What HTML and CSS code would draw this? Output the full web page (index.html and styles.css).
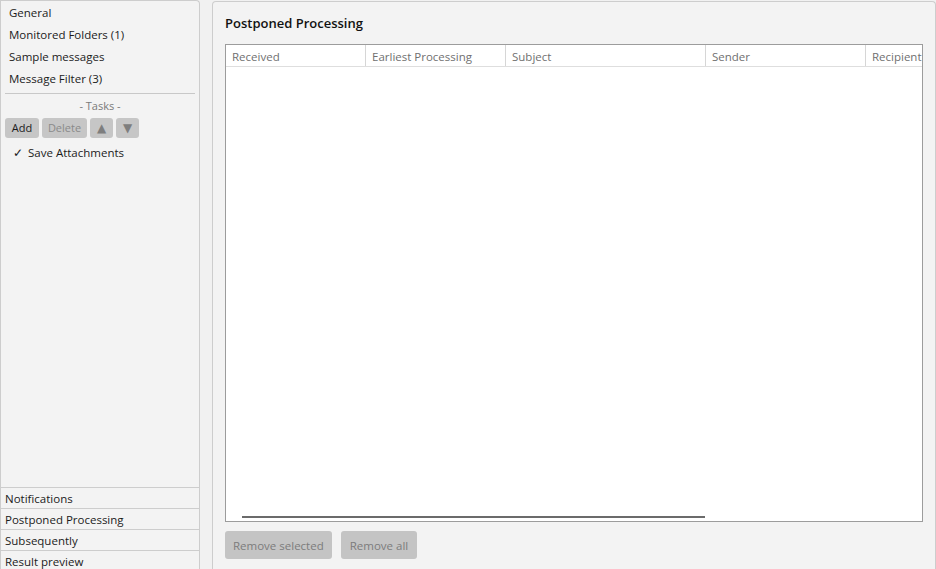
FILE: index.html
```html
<!DOCTYPE html>
<html>
<head>
<meta charset="utf-8">
<link rel="stylesheet" href="styles.css">
</head>
<body>
<div class="app">
  <aside class="side">
    <div class="side-top">
      <div class="nav-item">General</div>
      <div class="nav-item">Monitored Folders (1)</div>
      <div class="nav-item">Sample messages</div>
      <div class="nav-item">Message Filter (3)</div>
      <div class="sep"></div>
      <div class="tasks-label">- Tasks -</div>
      <div class="task-buttons">
        <button class="btn btn-add">Add</button>
        <button class="btn btn-dis">Delete</button>
        <button class="btn btn-arrow">&#9650;</button>
        <button class="btn btn-arrow">&#9660;</button>
      </div>
      <div class="task-item"><span class="check">&#10003;</span>Save Attachments</div>
    </div>
    <div class="side-bottom">
      <div class="bottom-item">Notifications</div>
      <div class="bottom-item">Postponed Processing</div>
      <div class="bottom-item">Subsequently</div>
      <div class="bottom-item">Result preview</div>
    </div>
  </aside>
  <main class="main">
    <h1 class="title">Postponed Processing</h1>
    <div class="table">
      <div class="thead">
        <div class="th w140">Received</div>
        <div class="th w140">Earliest Processing</div>
        <div class="th w200">Subject</div>
        <div class="th w160">Sender</div>
        <div class="th wrest">Recipient</div>
      </div>
      <div class="tbody">
        <div class="hscroll"></div>
      </div>
    </div>
    <div class="actions">
      <button class="abtn">Remove selected</button>
      <button class="abtn">Remove all</button>
    </div>
  </main>
</div>
</body>
</html>
```
FILE: styles.css
```css
* { box-sizing: border-box; }
html, body { margin: 0; padding: 0; }
body {
  width: 936px;
  height: 569px;
  overflow: hidden;
  background: #f1f1f1;
  font-family: "Open Sans", "Noto Sans", sans-serif;
  font-size: 11.5px;
  color: #1b1b1b;
}
.app {
  display: flex;
  height: 569px;
  gap: 12px;
}
.side {
  width: 200px;
  flex: none;
  display: flex;
  flex-direction: column;
  background: #f3f3f3;
  border: 1px solid #cdcdcd;
  border-bottom: none;
  border-top-right-radius: 4px;
}
.side-top { flex: 1; padding: 2px 4px 0 4px; }
.nav-item {
  height: 22px;
  line-height: 20px;
  padding-left: 4px;
}
.sep {
  height: 1px;
  background: #c8c8c8;
  margin: 2px 0 4px 0;
}
.tasks-label {
  text-align: center;
  color: #7a7a7a;
  font-size: 11px;
  line-height: 15px;
  height: 20px;
}
.task-buttons { display: flex; gap: 3px; height: 20px; }
.btn {
  border: none;
  border-radius: 3px;
  background: #c6c6c6;
  font-family: inherit;
  font-size: 11px;
  height: 20px;
  padding: 0;
  line-height: 20px;
}
.btn-add { width: 34px; color: #1b1b1b; }
.btn-dis { width: 45px; color: #8a8a8a; }
.btn-arrow { width: 23px; color: #7e7e7e; font-size: 12px; font-family: "DejaVu Sans", sans-serif; }
.task-item {
  margin-top: 5px;
  padding-left: 8px;
  line-height: 20px;
}
.check { margin-right: 5px; }
.side-bottom { border-top: 1px solid #cdcdcd; }
.bottom-item {
  height: 21px;
  line-height: 21px;
  padding-left: 4px;
  border-bottom: 1px solid #cdcdcd;
}
.bottom-item:last-child { border-bottom: none; height: 18px; }
.main {
  flex: 1;
  margin-top: 1px;
  background: #f3f3f3;
  border: 1px solid #cdcdcd;
  border-bottom: none;
  border-radius: 4px 4px 0 0;
  padding: 0 12px 0 12px;
  display: flex;
  flex-direction: column;
}
.title {
  margin: 11px 0 0 0;
  font-size: 13px;
  font-weight: 600;
  height: 31px;
  line-height: 20px;
  color: #111;
}
.table {
  height: 478px;
  background: #fff;
  border: 1px solid #9c9c9c;
  display: flex;
  flex-direction: column;
  overflow: hidden;
}
.thead {
  display: flex;
  height: 22px;
  border-bottom: 1px solid #dedede;
  flex: none;
}
.th {
  height: 21px;
  line-height: 23px;
  padding-left: 6px;
  color: #707070;
  font-size: 11.5px;
  border-right: 1px solid #d6d6d6;
  white-space: nowrap;
  overflow: hidden;
}
.w140 { width: 140px; }
.w200 { width: 200px; }
.w160 { width: 160px; }
.wrest { flex: 1; border-right: none; }
.tbody {
  flex: 1;
  display: flex;
  flex-direction: column;
  justify-content: flex-end;
  padding: 0 0 3px 16px;
}
.hscroll {
  width: 463px;
  height: 2px;
  background: #6b6b6b;
}
.actions {
  display: flex;
  gap: 9px;
  margin-top: 9px;
}
.abtn {
  border: none;
  border-radius: 3px;
  background: #c4c4c4;
  color: #7c7c7c;
  font-family: inherit;
  font-size: 11.5px;
  height: 28px;
  padding: 0 8px;
}
.abtn + .abtn { padding: 0 9px; }
```
